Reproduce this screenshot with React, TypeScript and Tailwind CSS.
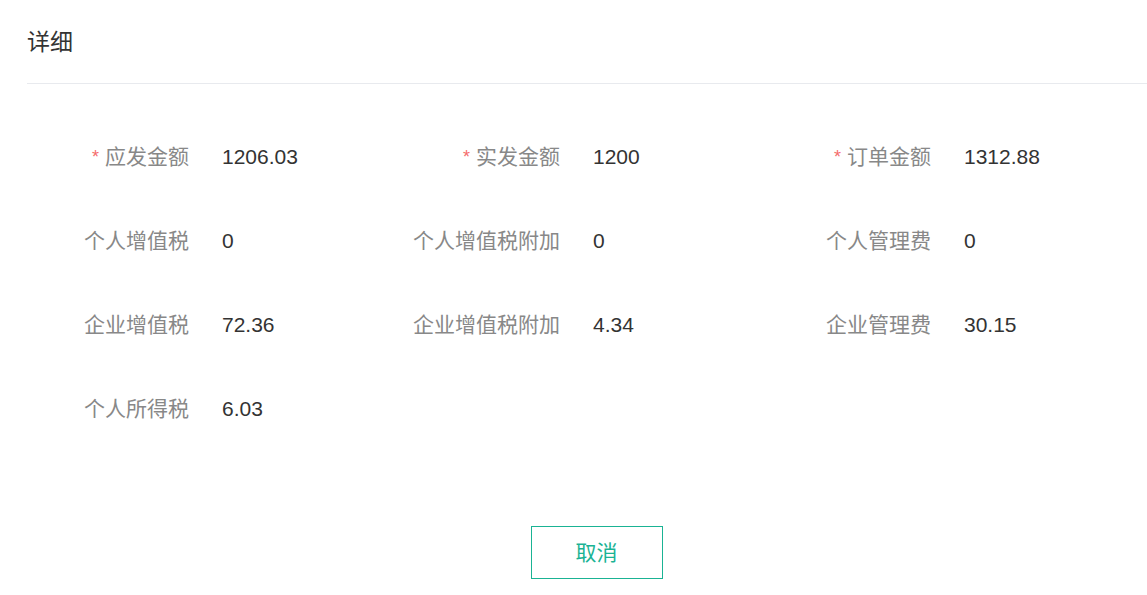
import React from 'react';

type Field = { label: string; value: string; required?: boolean };

const fields: Field[] = [
  { label: '应发金额', value: '1206.03', required: true },
  { label: '实发金额', value: '1200', required: true },
  { label: '订单金额', value: '1312.88', required: true },
  { label: '个人增值税', value: '0' },
  { label: '个人增值税附加', value: '0' },
  { label: '个人管理费', value: '0' },
  { label: '企业增值税', value: '72.36' },
  { label: '企业增值税附加', value: '4.34' },
  { label: '企业管理费', value: '30.15' },
  { label: '个人所得税', value: '6.03' },
];

function FieldItem({ field }: { field: Field }) {
  return (
    <div className="flex h-[84px] items-center">
      <div className="flex w-[150px] shrink-0 items-center justify-end text-[#888888]">
        {field.required && <span className="mr-[6px] text-[18px] text-[#f56c6c]">*</span>}
        <span>{field.label}</span>
      </div>
      <div className="ml-[33px] text-[#333333]">{field.value}</div>
    </div>
  );
}

export default function App() {
  return (
    <div
      className="h-[595px] w-[1147px] overflow-hidden bg-white"
      style={{ fontFamily: '"Liberation Sans", "Noto Sans CJK SC", sans-serif' }}
    >
      <div className="ml-[27px] w-[1139px]">
        <div className="h-[84px] border-b border-[#e8eaee] pt-[27px] text-[23px] leading-[30px] text-[#333333]">
          详细
        </div>

        <div className="ml-[12px] mt-[31px] grid grid-cols-[371px_371px_371px] text-[21px]">
          {fields.map((f) => (
            <FieldItem key={f.label} field={f} />
          ))}
        </div>

        <div className="mt-[75px] flex justify-center">
          <button className="h-[53px] w-[132px] border border-[#1ab394] bg-white text-[21px] text-[#1ab394]">
            取消
          </button>
        </div>
      </div>
    </div>
  );
}
